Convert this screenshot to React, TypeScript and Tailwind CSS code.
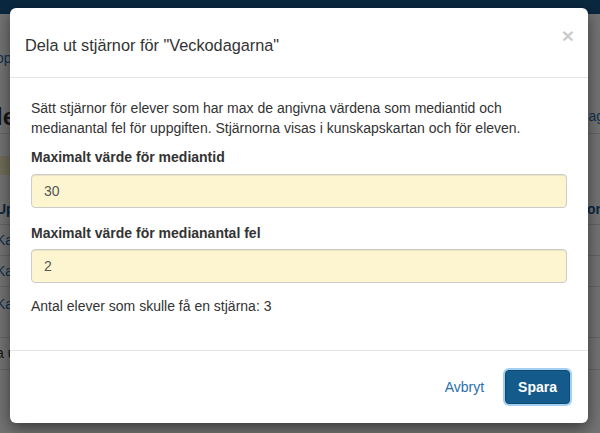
import React from "react";

const font = { fontFamily: '"Liberation Sans", Arial, sans-serif' };

// one strip of the page behind the backdrop: left and right fragments peek out beside the modal
function Strip({ h, left, right, line, className = "" }: { h: string; left?: React.ReactNode; right?: React.ReactNode; line?: boolean; className?: string }) {
  return (
    <div className={`flex shrink-0 items-center justify-between ${h} ${line ? "border-b border-[#ddd]" : ""} ${className}`}>
      <div className="-ml-[4px]">{left}</div>
      <div className="-mr-[4px]">{right}</div>
    </div>
  );
}

function BackgroundPage() {
  return (
    <div className="absolute inset-0 flex flex-col bg-white text-[14px]">
      <div className="h-[14px] shrink-0 bg-[#175a8c]" />
      <Strip h="h-[86px]" className="items-start pt-[34px]" left={<span className="text-[#2a6ead]">op</span>} />
      <Strip h="h-[34px]" line left={<span className="text-[24px] font-bold text-[#333]">le</span>} right={<span className="text-[#2a6ead]">ag</span>} />
      <div className="flex h-[91px] shrink-0 flex-col justify-between">
        <div className="mt-[22px] h-[19px] w-[30px] bg-[#f7efc4]" />
        <Strip h="h-[30px]" line left={<span className="font-bold text-[#175a8c]">Up</span>} right={<span className="font-bold text-[#175a8c]">on</span>} />
      </div>
      <Strip h="h-[31px]" line left={<span className="text-[#2a6ead]">Kal</span>} />
      <Strip h="h-[31px]" line left={<span className="text-[#2a6ead]">Kal</span>} />
      <Strip h="h-[51px]" line className="items-start pt-[7px]" left={<span className="text-[#2a6ead]">Kal</span>} />
      <Strip h="h-[32px]" line left={<span className="text-[#333]">a u</span>} />
      <div className="absolute inset-0 bg-black/55" />
    </div>
  );
}

export default function App() {
  return (
    <div className="relative h-[433px] w-[600px] overflow-hidden" style={font}>
      <BackgroundPage />

      <div className="absolute left-[10px] top-[8px] w-[578px] rounded-[6px] bg-white shadow-[0_5px_15px_rgba(0,0,0,0.5)]">
        <div className="flex items-start justify-between border-b border-[#e5e5e5] px-[15px] pt-[25px] pb-[20px]">
          <h4 className="text-[16.3px] leading-[24px] text-[#333]">Dela ut stjärnor för "Veckodagarna"</h4>
          <button className="mt-[-8px] mr-[-1px] text-[21px] font-bold leading-none text-black opacity-20">×</button>
        </div>

        <div className="px-[21px] pt-[20px] pb-[34px] text-[14px] leading-[20px] text-[#333]">
          <p>Sätt stjärnor för elever som har max de angivna värdena som mediantid och medianantal fel för uppgiften. Stjärnorna visas i kunskapskartan och för eleven.</p>

          <label className="mt-[9px] block font-bold">Maximalt värde för mediantid</label>
          <input
            defaultValue="30"
            className="mt-[7px] block h-[34px] w-full rounded-[4px] border border-[#ccc] bg-[#fdf5cf] px-[12px] text-[14px] text-[#555] shadow-[inset_0_1px_1px_rgba(0,0,0,0.075)] outline-none"
          />

          <label className="mt-[15px] block font-bold">Maximalt värde för medianantal fel</label>
          <input
            defaultValue="2"
            className="mt-[6px] block h-[34px] w-full rounded-[4px] border border-[#ccc] bg-[#fdf5cf] px-[12px] text-[14px] text-[#555] shadow-[inset_0_1px_1px_rgba(0,0,0,0.075)] outline-none"
          />

          <p className="mt-[13px]">Antal elever som skulle få en stjärna: 3</p>
        </div>

        <div className="flex items-center justify-end gap-[21px] border-t border-[#e5e5e5] px-[18px] pt-[19px] pb-[19px]">
          <button className="text-[14px] text-[#2a6ead]">Avbryt</button>
          <button className="h-[34px] rounded-[4px] border border-[#0c4a72] bg-[#145a8a] px-[12px] text-[14px] font-bold text-white shadow-[0_0_0_2px_rgba(102,175,233,0.6)]">
            Spara
          </button>
        </div>
      </div>
    </div>
  );
}
